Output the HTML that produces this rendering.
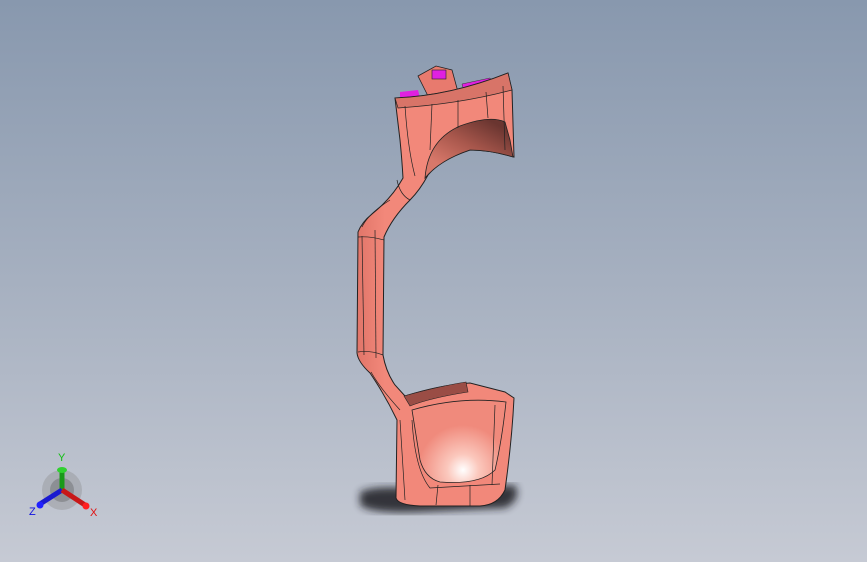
<!DOCTYPE html>
<html><head><style>
html,body{margin:0;padding:0;width:867px;height:562px;overflow:hidden}
body{background:linear-gradient(#8898ae 0%,#a6b0c0 50%,#c6cad4 100%)}
svg{position:absolute;left:0;top:0}
</style></head><body>
<svg width="867" height="562" viewBox="0 0 867 562" xmlns="http://www.w3.org/2000/svg">
<defs>
<radialGradient id="hl" cx="463" cy="470" r="45" gradientUnits="userSpaceOnUse">
<stop offset="0" stop-color="#fff"/><stop offset="0.35" stop-color="#fbc8bd"/><stop offset="1" stop-color="#f08a7c"/></radialGradient>
<linearGradient id="scoop" x1="480" y1="115" x2="450" y2="170" gradientUnits="userSpaceOnUse">
<stop offset="0" stop-color="#6a3530"/><stop offset="0.5" stop-color="#a8574c"/><stop offset="1" stop-color="#d8786a"/></linearGradient>
<linearGradient id="body" x1="355" y1="0" x2="385" y2="0" gradientUnits="userSpaceOnUse">
<stop offset="0" stop-color="#e07468"/><stop offset="1" stop-color="#f2887a"/></linearGradient>
<filter id="bl"><feGaussianBlur stdDeviation="4"/></filter>
</defs>
<path d="M360 492 Q380 484 420 490 L515 485 Q522 500 505 508 L420 512 Q370 514 360 505 Z" fill="#1e1e24" opacity="0.85" filter="url(#bl)"/>
<!-- magenta parts -->
<path d="M418 76 L436 66 L452 70 L458 92 L428 96 Z" fill="#e87a6e" stroke="#222" stroke-width="0.8"/>
<rect x="432" y="70" width="14" height="9" fill="#e020e0" stroke="#222" stroke-width="0.6"/>
<path d="M400 92 L418 90 L420 98 L400 100 Z" fill="#e020e0"/>
<path d="M462 84 L490 78 L494 86 L464 92 Z" fill="#e020e0" stroke="#333" stroke-width="0.5"/>
<!-- main silhouette -->
<path d="M395 98 Q450 96 508 73 L512 90 L514 157 Q490 150 470 150 Q440 160 428 175 Q420 190 410 200 Q392 218 384 237 L383 355 Q386 372 395 385 L405 396 Q440 385 470 383 L505 392 L514 398 Q512 440 505 490 Q498 505 480 506 L420 506 Q398 505 396 498 L397 420 Q385 395 370 373 Q358 362 357 353 L358 232 Q362 222 372 214 Q392 198 403 178 Q402 160 400 140 Z" fill="url(#body)" stroke="#222" stroke-width="1"/>
<!-- top scoop interior -->
<path d="M425 178 Q428 140 460 126 Q490 115 505 122 L510 140 L513 157 Q490 150 470 150 Q440 160 425 178 Z" fill="url(#scoop)" stroke="#222" stroke-width="0.8"/>
<path d="M395 98 Q450 96 508 73 L512 90 Q460 104 398 108 Z" fill="#d87468" stroke="#222" stroke-width="0.7"/>
<!-- bottom cup interior -->
<path d="M412 410 Q460 396 506 402 Q502 440 495 470 Q480 485 440 482 Q425 478 420 460 Z" fill="url(#hl)" stroke="#222" stroke-width="0.8"/>
<path d="M404 396 Q440 386 466 382 L468 392 Q430 398 410 406 Z" fill="#9a4d45" stroke="#222" stroke-width="0.6"/>
<g fill="none" stroke="#222" stroke-width="0.7">
<path d="M362 236 L364 355"/><path d="M375 230 L376 358"/>
<path d="M358 237 Q370 236 384 240"/><path d="M358 352 Q370 350 383 355"/>
<path d="M362 227 Q368 214 390 200"/><path d="M371 372 Q380 388 400 410"/>
<path d="M405 106 Q408 150 415 176"/><path d="M432 104 L430 150"/><path d="M458 100 L458 128"/><path d="M486 92 L488 118"/><path d="M503 86 L505 150"/>
<path d="M400 420 L405 500"/><path d="M412 420 Q415 470 430 488 L500 484"/><path d="M438 485 L436 505"/><path d="M470 485 L470 506"/><path d="M495 405 L492 485"/>
<path d="M397 180 Q400 195 410 200"/>
</g>
<circle cx="62" cy="490" r="20" fill="#888" opacity="0.35"/>
<circle cx="62" cy="490" r="12" fill="#555" opacity="0.35"/>
<line x1="62" y1="490" x2="62" y2="470" stroke="#1a9a1a" stroke-width="5"/>
<ellipse cx="62" cy="470" rx="5" ry="3" fill="#30d030"/>
<line x1="62" y1="490" x2="40" y2="504" stroke="#1a1ad0" stroke-width="5"/>
<circle cx="40" cy="505" r="3.5" fill="#2020ff"/>
<line x1="62" y1="490" x2="85" y2="505" stroke="#c81818" stroke-width="5"/>
<circle cx="86" cy="506" r="3.5" fill="#ff2020"/>
<text x="58" y="461" font-family="Liberation Sans,sans-serif" font-size="11" fill="#10c010">Y</text>
<text x="29" y="515" font-family="Liberation Sans,sans-serif" font-size="11" fill="#1010e0">Z</text>
<text x="90" y="516" font-family="Liberation Sans,sans-serif" font-size="11" fill="#e01010">X</text>
</svg>
</body></html>
